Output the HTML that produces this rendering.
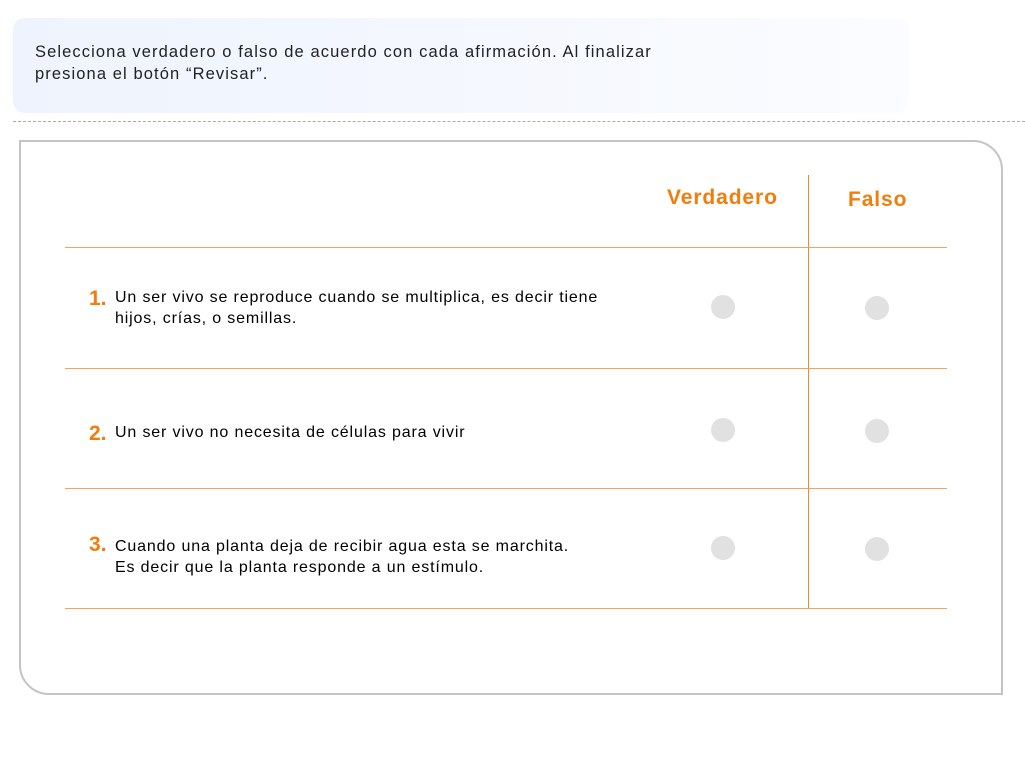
<!DOCTYPE html>
<html><head><meta charset="utf-8"><style>
body{margin:0;width:1025px;height:769px;background:#fff;font-family:"Liberation Sans",sans-serif;position:relative;overflow:hidden}
.hdr{position:absolute;left:13px;top:18px;width:897px;height:95px;border-radius:12px;background:linear-gradient(90deg,#eef3fd,#fbfcff)}
.hdr p{position:absolute;left:22px;top:23px;margin:0;font-size:16.5px;letter-spacing:1.1px;line-height:22px;color:#222}
.dash{position:absolute;left:13px;top:121px;width:1012px;border-top:1px dashed #aaa}
.card{position:absolute;left:19px;top:140px;width:980px;height:551px;border:2px solid #c4c4c4;border-radius:0 30px 0 30px}
.h{position:absolute;height:1px;left:65px;width:882px;background:#f5a35a}
.v{position:absolute;left:808px;top:175px;width:1px;height:433px;background:#f08a2c}
.t{position:absolute;color:#f27c0c;font-weight:bold;font-size:21px;letter-spacing:0.9px}
.c{position:absolute;width:24px;height:24px;border-radius:50%;background:#e1e1e1}
.q{position:absolute;left:115px;font-size:16px;letter-spacing:0.85px;line-height:21px;color:#000}
.n{position:absolute;left:89px;color:#f27c0c;font-weight:bold;font-size:21px}
</style></head><body>
<div class="hdr"><p>Selecciona verdadero o falso de acuerdo con cada afirmación. Al finalizar<br>presiona el botón “Revisar”.</p></div>
<div class="dash"></div>
<div class="card"></div>
<div class="t" style="left:667px;top:186px">Verdadero</div>
<div class="t" style="left:848px;top:188px">Falso</div>
<div class="v"></div>
<div class="h" style="top:247px"></div>
<div class="h" style="top:368px"></div>
<div class="h" style="top:488px"></div>
<div class="h" style="top:608px"></div>
<div class="n" style="top:287px">1.</div>
<div class="q" style="top:287px">Un ser vivo se reproduce cuando se multiplica, es decir tiene<br>hijos, crías, o semillas.</div>
<div class="n" style="top:422px">2.</div>
<div class="q" style="top:422px">Un ser vivo no necesita de células para vivir</div>
<div class="n" style="top:533px">3.</div>
<div class="q" style="top:536px">Cuando una planta deja de recibir agua esta se marchita.<br>Es decir que la planta responde a un estímulo.</div>
<div class="c" style="left:711px;top:295px"></div><div class="c" style="left:865px;top:296px"></div>
<div class="c" style="left:711px;top:418px"></div><div class="c" style="left:865px;top:419px"></div>
<div class="c" style="left:711px;top:536px"></div><div class="c" style="left:865px;top:537px"></div>
</body></html>
